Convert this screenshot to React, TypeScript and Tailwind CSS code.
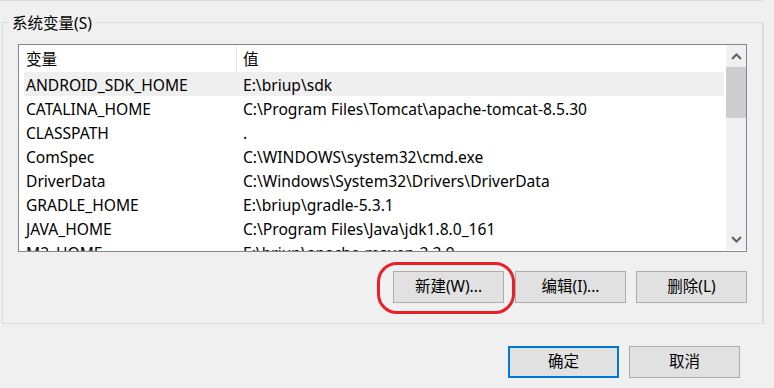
import React from "react";

const rows: [string, string][] = [
  ["ANDROID_SDK_HOME", "E:\\briup\\sdk"],
  ["CATALINA_HOME", "C:\\Program Files\\Tomcat\\apache-tomcat-8.5.30"],
  ["CLASSPATH", "."],
  ["ComSpec", "C:\\WINDOWS\\system32\\cmd.exe"],
  ["DriverData", "C:\\Windows\\System32\\Drivers\\DriverData"],
  ["GRADLE_HOME", "E:\\briup\\gradle-5.3.1"],
  ["JAVA_HOME", "C:\\Program Files\\Java\\jdk1.8.0_161"],
  ["M2_HOME", "E:\\briup\\apache-maven-3.3.9"],
];

const font = { fontFamily: '"Noto Sans", "Noto Sans CJK SC", sans-serif' };

function Chevron({ up }: { up?: boolean }) {
  return (
    <svg width="11" height="7" viewBox="0 0 11 7">
      <path
        d={up ? "M1 6 L5.5 1.5 L10 6" : "M1 1 L5.5 5.5 L10 1"}
        fill="none"
        stroke="#606060"
        strokeWidth="2"
      />
    </svg>
  );
}

function Btn({ label, def, className }: { label: string; def?: boolean; className?: string }) {
  return (
    <div
      className={
        "w-[111px] h-[32px] flex items-center justify-center bg-[#e1e1e1] text-[15.5px] text-black " +
        (def ? "border-2 border-[#0078d7] " : "border border-[#adadad] ") +
        (className ?? "")
      }
    >
      {label}
    </div>
  );
}

export default function App() {
  return (
    <div className="w-[774px] h-[388px] bg-[#f0f0f0] overflow-hidden relative" style={font}>
      <div className="w-[763px] h-px bg-[#dcdcdc]" />
      <div className="ml-[2px] mt-[21px] w-[761px] h-[302px] border border-[#dcdcdc] relative pl-[15px] pt-[21px]">
        <div className="absolute left-[6px] top-[-12px] px-[3px] bg-[#f0f0f0] text-[15.5px] leading-[24px] text-black">
          系统变量(S)
        </div>
        <div className="w-[729px] h-[208px] border border-[#828790] bg-white flex">
          <div className="w-[706px] flex flex-col overflow-hidden">
            <div className="h-[27px] flex text-[15.6px] text-black shrink-0">
              <div className="w-[218px] pl-[7px] pt-[3px] flex items-center border-r border-[#e5e5e5]">变量</div>
              <div className="pl-[6px] pt-[3px] flex items-center">值</div>
            </div>
            {rows.map(([k, v], i) => (
              <div
                key={k}
                className={
                  "h-[24px] shrink-0 flex items-center pt-[3px] text-[15.6px] text-black ml-[5px] " +
                  (i === 0 ? "bg-[#efefef]" : "")
                }
              >
                <div className="w-[213px] pl-[2px] whitespace-nowrap">{k}</div>
                <div className="pl-[6px] whitespace-nowrap">{v}</div>
              </div>
            ))}
          </div>
          <div className="w-[2px]" />
          <div className="w-[20px] mb-[1px] bg-[#f0f0f0] flex flex-col">
            <div className="h-[22px] flex items-center justify-center">
              <Chevron up />
            </div>
            <div className="h-[51px] bg-[#cdcdcd]" />
            <div className="flex-1" />
            <div className="h-[22px] flex items-center justify-center">
              <Chevron />
            </div>
          </div>
        </div>
        <div className="w-[729px] flex justify-end mt-[19px]">
          <Btn label="新建(W)..." />
          <Btn label="编辑(I)..." className="ml-[11px]" />
          <Btn label="删除(L)" className="ml-[10px]" />
        </div>
        <div className="absolute left-[374px] top-[239px] w-[138px] h-[52px] border-[3.5px] border-[#e8202a] rounded-[20px]" />
      </div>
      <div className="w-[740px] flex justify-end mt-[22px]">
        <Btn label="确定" def />
        <Btn label="取消" className="ml-[10px]" />
      </div>
      <div className="absolute left-[763px] top-[22px] w-px h-[302px] bg-[#dcdcdc]" />
    </div>
  );
}
